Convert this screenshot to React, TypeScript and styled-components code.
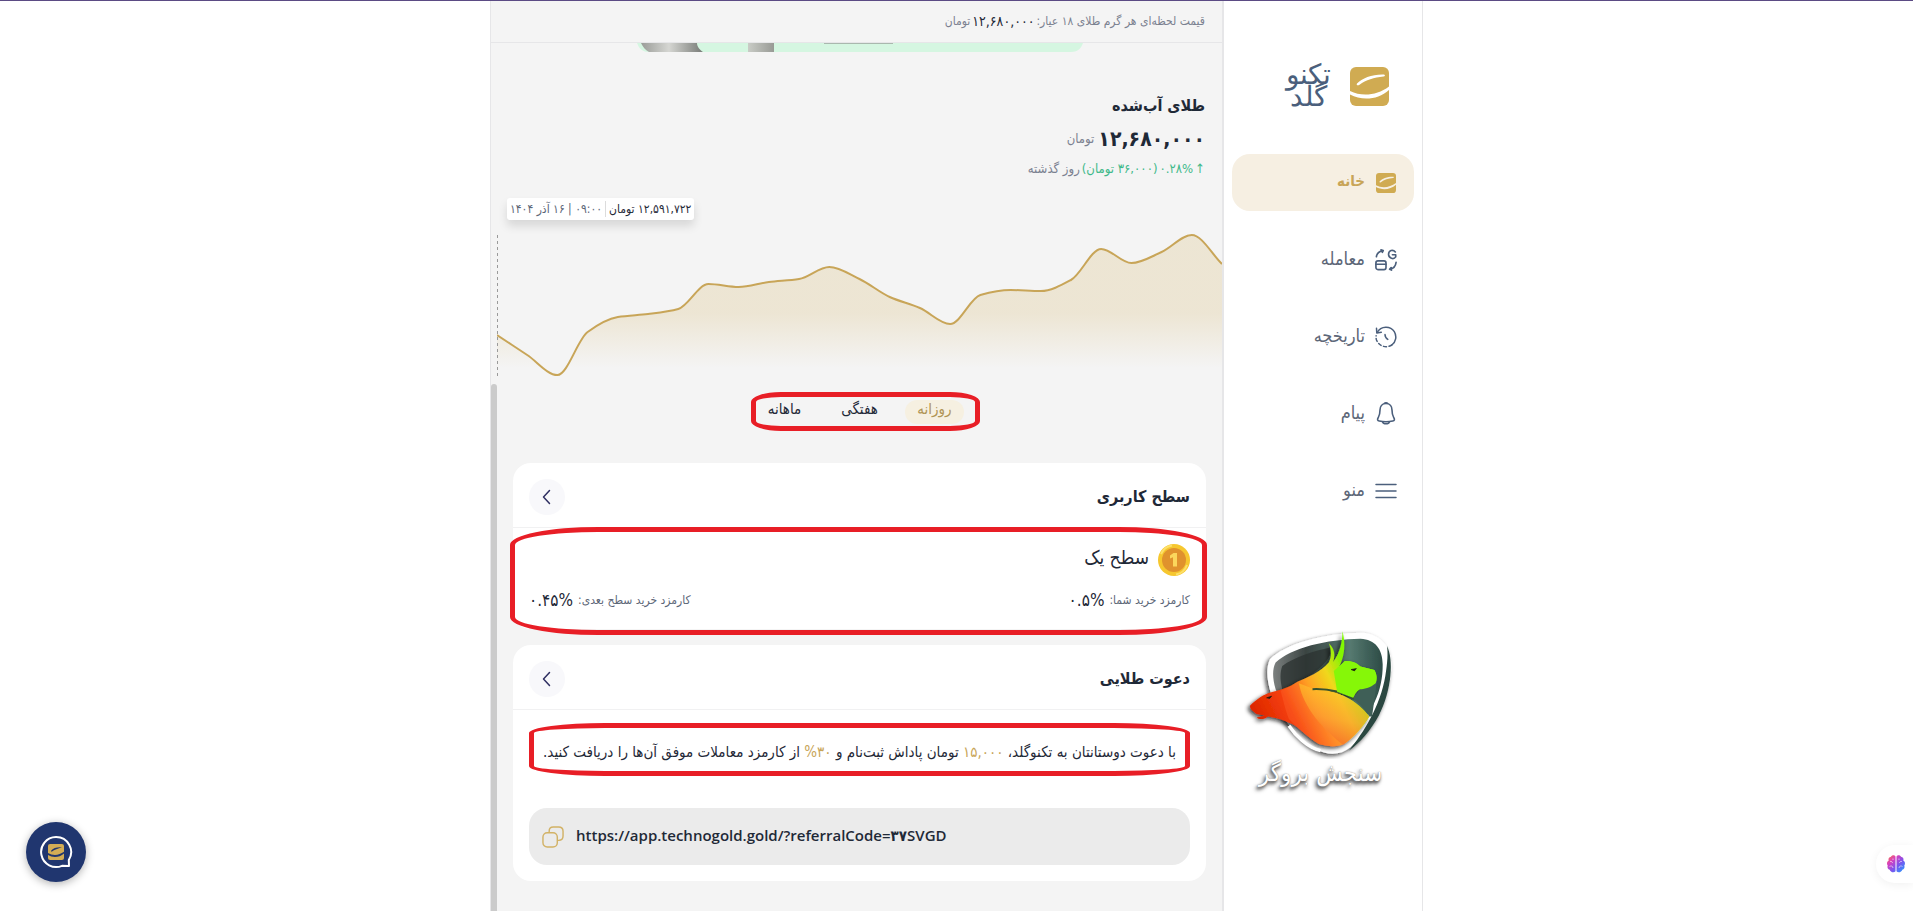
import React from 'react';
import styled, { createGlobalStyle, css } from 'styled-components';

const c = {
  ink: '#1f2937',
  slate: '#5d6778',
  muted: '#7b8190',
  navy: '#4b5f7c',
  gold: '#c8a558',
  goldSoft: '#f6efe2',
  canvas: '#f4f4f4',
  line: '#e6e6e8',
  red: '#e81e26',
  green: '#3fb98a',
};

const GlobalStyle = createGlobalStyle`
  *, *::before, *::after { box-sizing: border-box; }
  body {
    margin: 0;
    background: #fff;
    color: ${c.ink};
    font-family: "DejaVu Sans Condensed", "DejaVu Sans", sans-serif;
    font-size: 12px;
  }
  button { font: inherit; color: inherit; border: 0; background: none; padding: 0; cursor: pointer; }
  a { color: inherit; text-decoration: none; }
  h1, h2, p, ul { margin: 0; padding: 0; }
  svg { display: block; }
`;

const Page = styled.div`
  min-height: 100vh;
  border-top: 1px solid #5b4b84;
  display: flex;
  justify-content: center;
`;

const Frame = styled.div`
  display: grid;
  grid-template-columns: 199px minmax(0, 1fr);
  width: 100%;
  max-width: 933px;
`;

/* ---------- sidebar ---------- */

const Sidebar = styled.aside`
  display: flex;
  flex-direction: column;
  border-right: 1px solid ${c.line};
  padding: 65px 8px 0;
  background: #fff;
`;

const Brand = styled.a`
  display: flex;
  align-items: center;
  gap: 10px;
  height: 40px;
  padding-right: 25px;
`;

const BrandName = styled.span`
  font-family: "DejaVu Sans", sans-serif;
  font-weight: 200;
  font-size: 28px;
  line-height: 22px;
  color: ${c.navy};
  width: 64px;
  text-align: center;
`;

const Nav = styled.nav`
  display: flex;
  flex-direction: column;
  gap: 20px;
  margin-top: 48px;
`;

const NavLink = styled.a<{ $active?: boolean }>`
  display: flex;
  align-items: center;
  gap: 10px;
  height: 57px;
  padding-right: 17px;
  border-radius: 18px;
  font-size: 18px;
  color: ${c.slate};
  ${p => p.$active && css`
    background: ${c.goldSoft};
    color: ${c.gold};
    font-weight: 700;
    font-size: 15px;
  `}
`;

const NavIcon = styled.span`
  display: grid;
  place-items: center;
  width: 22px;
  height: 24px;
  color: ${c.navy};
`;

const NavLabel = styled.span`
  padding-bottom: 3px;
`;

const Partner = styled.div`
  display: flex;
  flex-direction: column;
  align-items: center;
  margin-top: 107px;
  padding-right: 5px;
`;

const PartnerName = styled.span`
  font-size: 24px;
  line-height: 24px;
  margin-top: 2px;
  color: #fff;
  text-shadow: 0 0 1px #777, -1px 2px 3px #555, -2px 3px 4px #666;
`;

/* ---------- main column ---------- */

const Main = styled.main`
  position: relative;
  background: ${c.canvas};
  border-left: 1px solid ${c.line};
  border-right: 2px solid ${c.line};
`;

const ScrollThumb = styled.div`
  position: absolute;
  left: 0;
  top: 383px;
  bottom: 0;
  width: 6px;
  border-radius: 3px 3px 0 0;
  background: #cbcbcb;
`;

const Ticker = styled.header`
  display: flex;
  align-items: center;
  height: 42px;
  padding: 0 17px 2px;
  border-bottom: 1px solid ${c.line};
  color: ${c.muted};
  gap: 2px;
  b { font-weight: 400; color: ${c.ink}; font-size: 14px; }
`;

const Content = styled.div`
  display: flex;
  flex-direction: column;
  padding-left: 6px;
`;

const Banner = styled.div`
  align-self: center;
  width: 446px;
  max-width: 100%;
  height: 9px;
`;

const Quote = styled.section`
  padding: 40px 17px 0;
`;

const QuoteTitle = styled.h1`
  font-size: 16px;
  font-weight: 700;
  line-height: 28px;
`;

const Price = styled.p`
  display: flex;
  align-items: center;
  gap: 4px;
  font-size: 13px;
  line-height: 38px;
  color: ${c.muted};
  b { font-size: 21px; color: ${c.ink}; }
`;

const Change = styled.p`
  display: flex;
  align-items: center;
  gap: 2px;
  font-size: 13px;
  line-height: 22px;
  color: ${c.muted};
  span { color: ${c.green}; }
`;

const Reading = styled.div`
  align-self: flex-end;
  display: flex;
  align-items: center;
  height: 22px;
  margin: 18px 0 0 10px;
  border-radius: 3px;
  background: #fff;
  box-shadow: 0 6px 10px rgba(0, 0, 0, 0.12);
  font-size: 12px;
  line-height: 16px;
  span { padding: 0 3px; }
  span + span { border-right: 1px solid #dcdcdc; color: ${c.slate}; }
`;

const Chart = styled.svg`
  width: 100%;
  height: 148px;
  margin-top: 12px;
`;

const Tabs = styled.div`
  position: relative;
  align-self: center;
  display: flex;
  gap: 16px;
  margin-top: 20px;
`;

const Tab = styled.button<{ $active?: boolean }>`
  width: 59px;
  height: 24px;
  padding-bottom: 6px;
  border-radius: 12px;
  font-size: 15px;
  line-height: 18px;
  ${p => p.$active && css`
    background: #f6f0e1;
    color: #b09556;
  `}
`;

const Cards = styled.div`
  display: flex;
  flex-direction: column;
  gap: 16px;
  margin-top: 39px;
  padding: 0 16px 29px;
`;

const Card = styled.section`
  border-radius: 18px;
  background: #fff;
`;

const CardHead = styled.header`
  display: flex;
  align-items: center;
  justify-content: space-between;
  height: 65px;
  padding: 4px 16px 0;
  border-bottom: 1px solid #f1f1f2;
`;

const CardTitle = styled.h2`
  font-size: 16px;
  font-weight: 700;
  line-height: 24px;
`;

const RoundButton = styled.button`
  display: grid;
  place-items: center;
  width: 36px;
  height: 36px;
  border-radius: 50%;
  background: #f8f8fb;
`;

const LevelBody = styled.div`
  position: relative;
  display: flex;
  flex-direction: column;
  gap: 12px;
  padding: 16px 16px 17px;
`;

const Level = styled.div`
  display: flex;
  gap: 9px;
  font-size: 19px;
  line-height: 26px;
`;

const Fees = styled.div`
  display: flex;
  justify-content: space-between;
  line-height: 24px;
`;

const Fee = styled.p`
  display: flex;
  gap: 5px;
  font-size: 12px;
  color: ${c.slate};
  b { font-weight: 400; font-size: 17px; color: ${c.ink}; }
`;

const InviteBody = styled.div`
  padding: 28px 16px 16px;
`;

const InviteText = styled.p`
  position: relative;
  text-align: center;
  font-size: 15px;
  line-height: 28px;
  em { font-style: normal; color: ${c.gold}; }
`;

const Referral = styled.div`
  display: flex;
  align-items: center;
  gap: 12px;
  height: 57px;
  margin-top: 42px;
  padding: 0 13px;
  border-radius: 18px;
  background: #ebebeb;
`;

const ReferralLink = styled.a`
  font-family: "Open Sans", "DejaVu Sans Condensed", sans-serif;
  font-size: 15px;
  font-weight: 600;
  line-height: 24px;
  padding-bottom: 4px;
`;

/* hand-drawn highlight laid over a block */
const Marker = styled.span<{ $inset: string; $radius: string }>`
  position: absolute;
  inset: ${p => p.$inset};
  border: 5px solid ${c.red};
  border-radius: ${p => p.$radius};
  pointer-events: none;
`;

/* ---------- floating controls ---------- */

const ChatButton = styled.button`
  position: fixed;
  left: 26px;
  bottom: 29px;
  display: grid;
  place-items: center;
  width: 60px;
  height: 60px;
  border-radius: 50%;
  background: #20366f;
  box-shadow: 0 2px 8px rgba(0, 0, 0, 0.3);
`;

const SideTab = styled.button`
  position: fixed;
  right: 0;
  bottom: 28px;
  display: flex;
  align-items: center;
  width: 37px;
  height: 38px;
  padding: 0 7px;
  border-radius: 19px 0 0 19px;
  background: #fff;
  box-shadow: 0 2px 10px rgba(0, 0, 0, 0.06);
`;

/* ---------- drawings ---------- */

const GoldMark = ({ size, bg = '#d0ab52', fg = '#fff' }: { size: number; bg?: string; fg?: string }) => (
  <svg width={size} height={size} viewBox="0 0 39 39" aria-hidden="true">
    <rect width="39" height="39" rx="6" fill={bg} />
    <path d="M7 16.500C12 11 23 7 34 7.500C35.500 8 35 9.500 33.500 9.600C24 10.500 16 13 9.500 17.800C7.500 19 6 18 7 16.500Z" fill={fg} />
    <path d="M0 24C12 30 27 28.500 39 19.500V23C28 33 12 34 0 27.500Z" fill={fg} />
  </svg>
);

const TradeIcon = () => (
  <svg width="22" height="22" viewBox="0 0 24 24" fill="none" stroke="currentColor" strokeWidth="1.8" strokeLinecap="round" strokeLinejoin="round">
    <path d="M1.500 8.500C2 5 4 2.800 8 2M6.500 1L9 1.700L8 3.600" />
    <rect x="1" y="13" width="11" height="9.500" rx="2.200" />
    <path d="M1 16.600H12M23 14.500C22.500 18.500 20 21.200 16.500 22M17.600 20.200L15.900 22.100L18 23" />
    <path d="M22.200 3.200C19.500 0 14.800 1.500 14.800 5.800C14.800 10.500 20.500 11.800 22.600 8.600V6.300H19" />
  </svg>
);

const HistoryIcon = () => (
  <svg width="22" height="22" viewBox="0 0 22 22" fill="none" stroke="currentColor" strokeWidth="1.500" strokeLinecap="round" strokeLinejoin="round">
    <path d="M2.200 6.500C6 -0.500 15.500 -0.200 19.300 5.600C22 10.200 21 15.800 16.800 19" />
    <path d="M16.800 19C11.500 22.500 4 20.500 1.500 14C1 12.500 0.900 11 1.100 9.800" strokeDasharray="3 2.600" />
    <path d="M1.500 2.200L1.800 6.900L6.300 6.300M10 8.500C10 11 11 12.200 12.800 13.400" />
  </svg>
);

const BellIcon = () => (
  <svg width="20" height="23" viewBox="0 0 20 23" fill="none" stroke="currentColor" strokeWidth="1.600" strokeLinejoin="round">
    <path d="M10 1.500C6 1.500 4 4.500 4 8C4 13 3.500 13.500 2 16C1.200 17.500 1.500 18.700 3.200 19C7.500 20 12.500 20 16.800 19C18.500 18.700 18.800 17.500 18 16C16.500 13.500 16 13 16 8C16 4.500 14 1.500 10 1.500Z" />
    <path d="M8.200 1.500C9 0.700 11 0.700 11.800 1.500M6.500 19.700C7.500 22.500 12.500 22.500 13.500 19.700" />
  </svg>
);

const MenuIcon = () => (
  <svg width="22" height="16" viewBox="0 0 22 16" stroke="currentColor" strokeWidth="1.500" strokeLinecap="round">
    <path d="M1 1.500H21M1 8H21M1 14.500H21" />
  </svg>
);

const ChevronIcon = () => (
  <svg width="10" height="16" viewBox="0 0 10 16" fill="none" stroke="#2f2f62" strokeWidth="1.500" strokeLinecap="round" strokeLinejoin="round">
    <path d="M7.500 1.500L1.500 8L7.500 14.500" />
  </svg>
);

const CopyIcon = () => (
  <svg width="22" height="22" viewBox="0 0 23 23" fill="none" stroke="#d2b266" strokeWidth="1.500">
    <rect x="1" y="7" width="15" height="15" rx="4.500" />
    <path d="M7.500 6.500V5.200C7.500 2.600 9 1 11.700 1H17.500C20.300 1 22 2.700 22 5.500V10.500C22 13.400 20.500 15 17.600 15H16" />
  </svg>
);

const Coin = () => (
  <svg width="32" height="32" viewBox="0 0 32 32" aria-hidden="true">
    <circle cx="16" cy="16" r="16" fill="#f6c72f" />
    <path d="M3 10A14.500 14.500 0 0 1 14 1.500M29 21A14.500 14.500 0 0 1 18 30.500" stroke="#fde06a" strokeWidth="2" fill="none" />
    <circle cx="16" cy="16" r="12" fill="#e0922d" />
    <path d="M12 11.500L15.500 9H19V22.500H15V13.300L12 14.500Z" fill="#fbd75c" />
  </svg>
);

const BannerArt = () => (
  <svg width="100%" height="9" viewBox="0 0 446 9" preserveAspectRatio="none" aria-hidden="true">
    <defs>
      <linearGradient id="steel">
        <stop offset="0" stopColor="#9a9c98" />
        <stop offset=".45" stopColor="#d5d6d2" />
        <stop offset="1" stopColor="#777a76" />
      </linearGradient>
      <linearGradient id="post">
        <stop offset="0" stopColor="#c9ccc6" />
        <stop offset="1" stopColor="#989a95" />
      </linearGradient>
    </defs>
    <path d="M0 0H446C444 6 440 9 434 9H12C6 9 2 6 0 0Z" fill="#d5f6e1" />
    <path d="M4 0H60C60 4 63 7 66 9H12C8 7 6 4 4 0Z" fill="url(#steel)" />
    <path d="M111 0H137V9H111Z" fill="url(#post)" />
    <path d="M187 0H256V1H187Z" fill="#a9b8ae" />
  </svg>
);

const PartnerLogo = () => (
  <svg width="153" height="133" viewBox="70 50 460 400" aria-hidden="true">
    <defs>
      <linearGradient id="shield" x1="0" y1="0" x2="1" y2="0">
        <stop offset="0" stopColor="#7c807f" />
        <stop offset=".3" stopColor="#3a4442" />
        <stop offset=".7" stopColor="#567a70" />
        <stop offset="1" stopColor="#2d4b46" />
      </linearGradient>
      <linearGradient id="beast" x1="110" y1="330" x2="440" y2="170" gradientUnits="userSpaceOnUse">
        <stop offset="0" stopColor="#dd2600" />
        <stop offset=".28" stopColor="#f5400c" />
        <stop offset=".5" stopColor="#ffa024" />
        <stop offset=".68" stopColor="#f0d81c" />
        <stop offset=".84" stopColor="#84f500" />
        <stop offset="1" stopColor="#7dff00" />
      </linearGradient>
      <linearGradient id="glow" x1="300" y1="410" x2="330" y2="240" gradientUnits="userSpaceOnUse">
        <stop offset="0" stopColor="#f4562a" />
        <stop offset=".5" stopColor="#fd9c35" />
        <stop offset="1" stopColor="#ffc02c" />
      </linearGradient>
      <filter id="drop" x="-20%" y="-20%" width="140%" height="140%">
        <feDropShadow dx="-6" dy="6" stdDeviation="7" floodColor="#111" floodOpacity=".8" />
      </filter>
    </defs>
    <g filter="url(#drop)">
      <path d="M148 150C190 105 310 70 425 70C480 74 512 110 513 165C514 250 470 345 390 415C360 440 320 440 285 420C240 395 180 330 150 250C138 210 136 175 148 150Z" fill="#fff" />
      <path d="M500 110C520 150 516 240 475 320C450 365 420 400 385 425C430 370 480 290 495 200C502 160 503 130 500 110Z" fill="#29463f" />
      <path d="M165 160C210 115 320 90 420 88C465 90 487 120 487 165C488 245 455 320 380 385C350 405 320 405 292 392C245 365 190 300 165 240C155 205 155 180 165 160Z" fill="url(#shield)" />
    </g>
    <path d="M185 170C220 145 280 125 330 115C335 160 280 190 235 222L205 235L185 240C178 210 178 190 185 170Z" fill="#2b3130" opacity=".75" />
    <path d="M88 290C105 272 130 255 150 250C180 243 205 235 232 217C260 205 300 190 325 160C335 140 332 120 325 102C342 118 345 135 338 158C360 130 366 95 366 66C378 110 370 155 348 185C352 180 365 170 373 155C395 155 408 160 420 172L462 182C470 195 470 210 466 222C450 236 430 240 418 240C405 248 402 258 398 266C370 255 320 238 276 238C360 245 410 275 447 322C430 350 405 380 375 402C350 417 320 412 295 405C260 385 235 355 215 345C185 330 160 325 142 322C130 332 115 332 108 325L133 319L108 315C95 305 88 300 88 290Z" fill="url(#beast)" filter="url(#drop)" />
    <path d="M180 245L232 222C250 300 310 360 368 408C345 418 315 412 295 405C260 385 225 350 205 330C190 290 185 260 180 245Z" fill="#ff6a30" opacity=".35" />
    <path d="M276 238C360 245 410 275 447 322C430 350 400 385 368 408C310 360 250 300 235 222Z" fill="url(#glow)" opacity=".65" />
    <path d="M276 240C330 238 370 250 402 270" fill="none" stroke="#37522f" strokeWidth="6" />
    <path d="M402 266L418 240L470 215L455 322H447C435 300 420 284 398 270Z" fill="#3f5f57" />
    <path d="M373 155C395 155 408 160 420 172L462 182C470 195 470 210 466 222C450 236 430 240 418 240C405 248 402 258 398 266L350 248L340 185Z" fill="#86f708" />
    <path d="M392 181L408 178L402 185ZM138 266L153 261L147 268Z" fill="#1d1d12" stroke="#1d1d12" strokeWidth="2" />
    <path d="M205 350C225 380 260 415 300 425" fill="none" stroke="#fff" strokeWidth="10" />
  </svg>
);

const ChatIcon = () => (
  <svg width="34" height="34" viewBox="0 0 34 34" aria-hidden="true">
    <path d="M17 2A15 15 0 1 0 23 30.800L30 31L29.800 25A15 15 0 0 0 17 2Z" fill="none" stroke="#fff" strokeWidth="2" strokeLinejoin="round" />
    <svg x="9" y="9" width="16" height="16" viewBox="0 0 39 39">
      <rect width="39" height="39" rx="5" fill="#d3ad55" />
      <path d="M7 17C13 9 23 7 34 8C24 12 16 13 9 19ZM0 22C12 29 27 28 39 19V23C28 33 12 34 0 27Z" fill="#20366f" />
    </svg>
  </svg>
);

const BrainIcon = () => (
  <svg width="20" height="20" viewBox="0 0 20 20" aria-hidden="true">
    <defs>
      <linearGradient id="brain" x1="0" y1="0" x2="1" y2="1">
        <stop offset="0" stopColor="#ff7a3c" />
        <stop offset=".3" stopColor="#d63fc0" />
        <stop offset=".6" stopColor="#7a55ee" />
        <stop offset="1" stopColor="#1ea4ff" />
      </linearGradient>
    </defs>
    <path d="M9.500 2.500C8.500 .8 5.800 .9 5 2.800C3 2.900 2 4.800 2.700 6.400C.8 7.300 .5 10 1.700 11.400C.9 13.300 2 15.200 3.700 15.700C4.300 18.200 8 19.200 9.500 17.200ZM10.500 2.500C11.500 .8 14.200 .9 15 2.800C17 2.900 18 4.800 17.300 6.400C19.200 7.300 19.500 10 18.300 11.400C19.100 13.300 18 15.200 16.300 15.700C15.700 18.200 12 19.200 10.500 17.200Z" fill="url(#brain)" />
    <path d="M4 7.500C5.500 7 6.500 8 6.500 9M3.500 12.500C5 11.500 7 12 7 14M7 4.500V6M16 7.500C14.500 7 13.500 8 13.500 9M16.500 12.500C15 11.500 13 12 13 14M13 4.500V6" stroke="#fff" strokeWidth=".8" fill="none" opacity=".7" />
  </svg>
);

/* ---------- price curve ---------- */

const prices = [
  103, 123, 143, 100, 85, 82, 77, 52, 55, 50, 47, 35, 47, 65, 76, 92, 63, 58, 59, 48, 17, 31, 20, 3, 32,
];
const CHART_W = 725;

/* monotone cubic through evenly spaced samples */
function curve(values: number[], width: number): string {
  const step = width / (values.length - 1);
  const slope = (i: number) => values[i + 1] - values[i];
  const tangent = values.map((_, i) => {
    if (i === 0) return slope(0);
    if (i === values.length - 1) return slope(i - 1);
    const a = slope(i - 1);
    const b = slope(i);
    return a * b <= 0 ? 0 : (2 * a * b) / (a + b);
  });
  return values.reduce((path, y, i) => {
    if (i === 0) return `M0 ${y}`;
    const x = i * step;
    const c1 = values[i - 1] + tangent[i - 1] / 3;
    const c2 = y - tangent[i] / 3;
    return `${path}C${x - (2 * step) / 3} ${c1} ${x - step / 3} ${c2} ${x} ${y}`;
  }, '');
}

const PriceChart = () => {
  const line = curve(prices, CHART_W);
  return (
    <Chart viewBox={`0 0 ${CHART_W} 148`} preserveAspectRatio="none" role="img" aria-label="نمودار قیمت">
      <defs>
        <linearGradient id="area" x1="0" y1="0" x2="0" y2="148" gradientUnits="userSpaceOnUse">
          <stop offset="0" stopColor="#d0ab52" stopOpacity=".2" />
          <stop offset=".55" stopColor="#d0ab52" stopOpacity=".2" />
          <stop offset=".92" stopColor="#d0ab52" stopOpacity="0" />
        </linearGradient>
      </defs>
      <path d={`${line}V148H0Z`} fill="url(#area)" />
      <path d="M.5 3V144" stroke="#9a9a9a" strokeDasharray="3 3" />
      <path d={line} fill="none" stroke={c.gold} strokeWidth="2" />
    </Chart>
  );
};

const navItems = [
  { label: 'خانه', icon: <GoldMark size={20} fg="#f6efe2" />, active: true },
  { label: 'معامله', icon: <TradeIcon /> },
  { label: 'تاریخچه', icon: <HistoryIcon /> },
  { label: 'پیام', icon: <BellIcon /> },
  { label: 'منو', icon: <MenuIcon /> },
];

const periods = ['روزانه', 'هفتگی', 'ماهانه'];

export default function App() {
  return (
    <Page dir="rtl" lang="fa">
      <GlobalStyle />
      <Frame>
        <Sidebar>
          <Brand href="#">
            <GoldMark size={39} />
            <BrandName>تکنو گلد</BrandName>
          </Brand>
          <Nav>
            {navItems.map(item => (
              <NavLink key={item.label} href="#" $active={item.active}>
                <NavIcon>{item.icon}</NavIcon>
                <NavLabel>{item.label}</NavLabel>
              </NavLink>
            ))}
          </Nav>
          <Partner>
            <PartnerLogo />
            <PartnerName>سنجش بروگر</PartnerName>
          </Partner>
        </Sidebar>

        <Main>
          <Ticker>
            <span>قیمت لحظه‌ای هر گرم طلای ۱۸ عیار:</span>
            <b>۱۲,۶۸۰,۰۰۰</b>
            <span>تومان</span>
          </Ticker>
          <Content>
            <Banner><BannerArt /></Banner>
            <Quote>
              <QuoteTitle>طلای آب‌شده</QuoteTitle>
              <Price><b>۱۲,۶۸۰,۰۰۰</b>تومان</Price>
              <Change>
                <span>↑</span>
                <span dir="ltr">۰.۲۸%</span>
                <span>(۳۶,۰۰۰ تومان)</span>
                روز گذشته
              </Change>
            </Quote>
            <Reading>
              <span>۱۲,۵۹۱,۷۲۲ تومان</span>
              <span>۰۹:۰۰ | ۱۶ آذر ۱۴۰۴</span>
            </Reading>
            <PriceChart />
            <Tabs>
              {periods.map((label, i) => (
                <Tab key={label} type="button" $active={i === 0}>{label}</Tab>
              ))}
              <Marker $inset="-8px -16px -7px -4px" $radius="30px / 10px" />
            </Tabs>

            <Cards>
              <Card>
                <CardHead>
                  <CardTitle>سطح کاربری</CardTitle>
                  <RoundButton type="button" aria-label="سطح کاربری"><ChevronIcon /></RoundButton>
                </CardHead>
                <LevelBody>
                  <Level><Coin />سطح یک</Level>
                  <Fees>
                    <Fee>کارمزد خرید شما: <b dir="ltr">۰.۵%</b></Fee>
                    <Fee>کارمزد خرید سطح بعدی: <b dir="ltr">۰.۴۵%</b></Fee>
                  </Fees>
                  <Marker $inset="-1px -1px -6px -3px" $radius="88px / 18px" />
                </LevelBody>
              </Card>

              <Card>
                <CardHead>
                  <CardTitle>دعوت طلایی</CardTitle>
                  <RoundButton type="button" aria-label="دعوت طلایی"><ChevronIcon /></RoundButton>
                </CardHead>
                <InviteBody>
                  <InviteText>
                    با دعوت دوستانتان به تکنوگلد، <em>۱۵,۰۰۰</em> تومان پاداش ثبت‌نام و <em>۳۰%</em> از کارمزد معاملات موفق آن‌ها را دریافت کنید.
                    <Marker $inset="-15px 0 -10px 0" $radius="76px / 10px" />
                  </InviteText>
                  <Referral dir="ltr">
                    <button type="button" aria-label="کپی"><CopyIcon /></button>
                    <ReferralLink href="#">https://app.technogold.gold/?referralCode=۳۷SVGD</ReferralLink>
                  </Referral>
                </InviteBody>
              </Card>
            </Cards>
          </Content>
          <ScrollThumb />
        </Main>
      </Frame>

      <ChatButton type="button" aria-label="گفتگو"><ChatIcon /></ChatButton>
      <SideTab type="button" aria-label="دستیار"><BrainIcon /></SideTab>
    </Page>
  );
}
